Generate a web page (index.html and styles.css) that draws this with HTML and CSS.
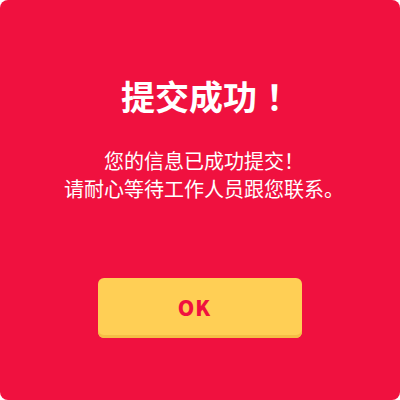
FILE: index.html
```html
<!DOCTYPE html>
<html lang="zh">
<head>
<meta charset="utf-8">
<link rel="stylesheet" href="styles.css">
</head>
<body>
<div class="dialog">
  <h1 class="title">提交成功<span class="bang title-bang">！</span></h1>
  <p class="msg">您的信息已成功提交<span class="bang">！</span><br>请耐心等待工作人员跟您联系。</p>
  <button class="ok">OK</button>
</div>
</body>
</html>
```
FILE: styles.css
```css
html, body {
  margin: 0;
  padding: 0;
  background: #ffffff;
}
.dialog {
  width: 400px;
  height: 400px;
  box-sizing: border-box;
  background: #f0113f;
  border-radius: 8px;
  display: flex;
  flex-direction: column;
  align-items: center;
  padding-top: 74px;
  font-family: "Noto Sans CJK SC", "Noto Sans", sans-serif;
  color: #ffffff;
}
.title {
  margin: 0;
  padding-left: 21px;
  font-size: 34px;
  line-height: 44px;
  font-weight: 700;
}
.bang {
  font-family: "Noto Sans CJK JP", sans-serif;
}
.title-bang {
  margin-left: 9px;
}
.msg {
  margin: 29px 0 0;
  padding-left: 8px;
  font-size: 20px;
  line-height: 28px;
  text-align: center;
}
.ok {
  margin-top: 75px;
  width: 204px;
  height: 60px;
  box-sizing: border-box;
  border: none;
  border-radius: 6px;
  background: #ffcf55;
  box-shadow: inset 0 -3px 0 #f5bd46;
  color: #f0113f;
  font-family: "Noto Sans CJK SC", "Noto Sans", sans-serif;
  font-size: 21px;
  font-weight: 900;
  letter-spacing: 1px;
  padding: 0 11px 2px 0;
}
```
